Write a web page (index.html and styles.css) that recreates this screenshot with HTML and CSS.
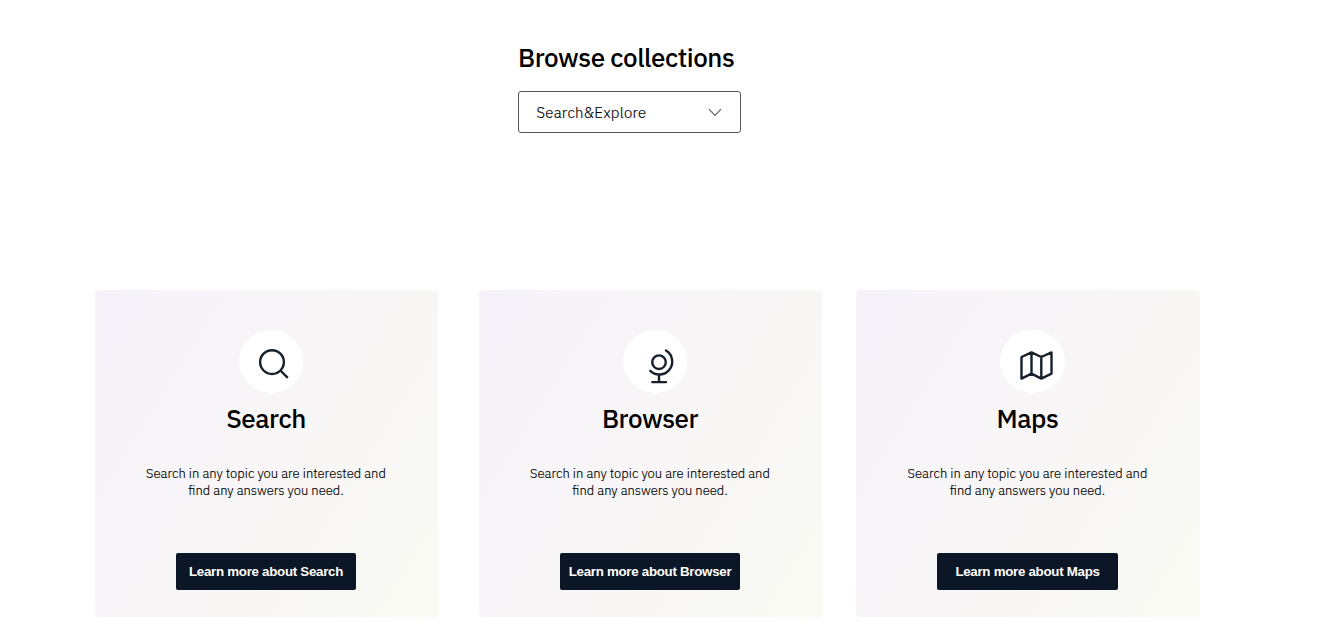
FILE: index.html
```html
<!DOCTYPE html>
<html lang="en">
<head>
<meta charset="utf-8">
<title>Browse collections</title>
<link rel="stylesheet" href="styles.css">
</head>
<body>
<header class="browse">
  <h1 class="browse-title">Browse collections</h1>
  <div class="select" role="combobox" aria-expanded="false" tabindex="0">
    <span class="select-value">Search&amp;Explore</span>
    <svg class="chevron" viewBox="0 0 14 9" aria-hidden="true"><path d="M1 1.2 7 7.4 13 1.2"/></svg>
  </div>
</header>
<main class="cards">
  <article class="card">
    <div class="badge">
      <svg class="icon" viewBox="0 0 64 63" aria-hidden="true"><circle cx="33" cy="32.1" r="11.9"/><path d="M41.4 40.5 48.8 47.9"/></svg>
    </div>
    <h2 class="card-title">Search</h2>
    <p class="card-text">Search in any topic you are interested and<br>find any answers you need.</p>
    <button class="card-button">Learn more about Search</button>
  </article>
  <article class="card">
    <div class="badge">
      <svg class="icon round" viewBox="0 0 64 63" aria-hidden="true"><circle cx="36" cy="32.2" r="6.8"/><path d="M43 20.5A12.95 12.95 0 1 1 27.3 40.9M36 44.6V51.9M29.3 52.1H43"/></svg>
    </div>
    <h2 class="card-title">Browser</h2>
    <p class="card-text">Search in any topic you are interested and<br>find any answers you need.</p>
    <button class="card-button">Learn more about Browser</button>
  </article>
  <article class="card card-wide">
    <div class="badge">
      <svg class="icon round" viewBox="0 0 64 63" aria-hidden="true"><path d="M21.5 27 31.5 22.4 41.3 27 51.5 22.4V43.6L41.3 48.6 31.5 43.6 21.5 48.6ZM31.5 22.4V43.6M41.3 27V48.6"/></svg>
    </div>
    <h2 class="card-title">Maps</h2>
    <p class="card-text">Search in any topic you are interested and<br>find any answers you need.</p>
    <button class="card-button">Learn more about Maps</button>
  </article>
</main>
</body>
</html>
```
FILE: styles.css
```css
* {
  box-sizing: border-box;
}

body {
  margin: 0;
  height: 633px;
  overflow: hidden;
  background: #fff;
  color: #000;
  font-family: "IBM Plex Sans", Roboto, sans-serif;
}

.browse {
  height: 290px;
  padding: 41px 0 0 518px;
}

.browse-title {
  margin: 0;
  font-size: 26px;
  line-height: 32px;
  font-weight: 500;
  letter-spacing: -0.45px;
  white-space: nowrap;
}

.select {
  display: flex;
  align-items: center;
  justify-content: space-between;
  width: 223px;
  height: 42px;
  margin-top: 18px;
  padding: 0 18px 0 17.5px;
  border: 1px solid #55575b;
  border-radius: 3px;
}

.select-value {
  font-size: 15px;
  font-weight: 300;
  letter-spacing: 0.25px;
  -webkit-text-stroke: 0.15px #000;
}

.chevron {
  width: 14px;
  height: 9px;
  fill: none;
  stroke: #666;
  stroke-width: 1.2;
}

.cards {
  display: grid;
  grid-template-columns: 343px 343px 344px;
  column-gap: 41px;
  padding-left: 95px;
}

.card {
  display: flex;
  flex-direction: column;
  align-items: center;
  height: 327px;
  padding: 40px 1px 0 0;
  border-radius: 4px;
  background: linear-gradient(122deg, #f7f2fa 0%, #f8f5f8 35%, #f8f7f6 60%, #f8f8f5 80%, #f9fbf2 100%);
}

.card-wide {
  margin-left: -7px;
  margin-right: 7px;
}

.badge {
  width: 64px;
  height: 63px;
  margin-left: 10px;
  border-radius: 50%;
  background: #fff;
}

.icon {
  display: block;
  width: 64px;
  height: 63px;
  fill: none;
  stroke: #18202b;
  stroke-width: 2.4;
}

.card-wide .badge {
  width: 65px;
}

.round {
  stroke-linecap: round;
  stroke-linejoin: round;
}

.card-title {
  margin: 9px 0 0;
  font-size: 26px;
  line-height: 32px;
  font-weight: 500;
  letter-spacing: -0.45px;
}

.card-text {
  margin: 31px 0 0;
  font-size: 13px;
  line-height: 17px;
  font-weight: 300;
  text-align: center;
  white-space: nowrap;
  -webkit-text-stroke: 0.15px #000;
}

.card-button {
  width: 180px;
  height: 37px;
  margin-top: 54px;
  padding: 0;
  border: 0;
  border-radius: 2px;
  background: #0b1726;
  color: #fff;
  font: bold 13.333px "Liberation Sans", Arial, sans-serif;
  letter-spacing: -0.29px;
  white-space: nowrap;
}

.card-wide .card-button {
  width: 181px;
}
```
